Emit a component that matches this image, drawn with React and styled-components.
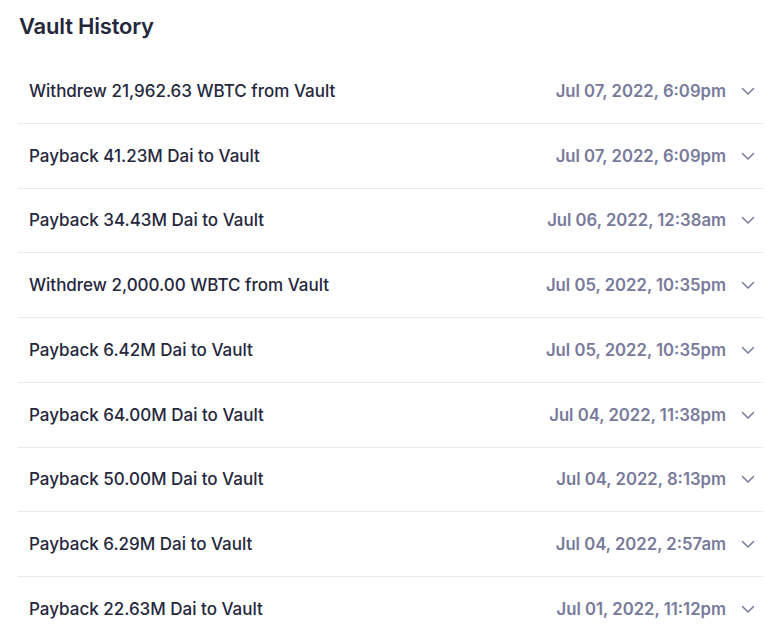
import React from "react";
import styled, { createGlobalStyle } from "styled-components";

const Global = createGlobalStyle`
  html, body { margin: 0; padding: 0; background: #fff; }
  body { font-family: Inter, "Noto Sans", sans-serif; -webkit-font-smoothing: antialiased; }
`;

const Page = styled.div`
  padding: 10px 18px 0 18px;
  width: 745px;
`;

const Title = styled.h2`
  margin: 0 0 0 1px;
  font-size: 22px;
  line-height: 32px;
  font-weight: 600;
  color: #25273d;
  letter-spacing: -0.2px;
`;

const List = styled.div`
  margin-top: 17px;
  display: flex;
  flex-direction: column;
`;

const Row = styled.div`
  height: 63.75px;
  display: flex;
  align-items: center;
  justify-content: space-between;
  padding: 0 8.5px 0 11px;
  border-bottom: 1px solid #eaeaea;
`;

const Label = styled.span`
  font-size: 17px;
  font-weight: 500;
  color: #25273d;
`;

const Right = styled.div`
  display: flex;
  align-items: center;
  gap: 14.5px;
`;

const DateText = styled.span`
  font-size: 16.7px;
  font-weight: 600;
  color: #787a9b;
`;

const Chevron = styled.svg`
  width: 14px;
  height: 14px;
  display: block;
`;

const items = [
  ["Withdrew 21,962.63 WBTC from Vault", "Jul 07, 2022, 6:09pm"],
  ["Payback 41.23M Dai to Vault", "Jul 07, 2022, 6:09pm"],
  ["Payback 34.43M Dai to Vault", "Jul 06, 2022, 12:38am"],
  ["Withdrew 2,000.00 WBTC from Vault", "Jul 05, 2022, 10:35pm"],
  ["Payback 6.42M Dai to Vault", "Jul 05, 2022, 10:35pm"],
  ["Payback 64.00M Dai to Vault", "Jul 04, 2022, 11:38pm"],
  ["Payback 50.00M Dai to Vault", "Jul 04, 2022, 8:13pm"],
  ["Payback 6.29M Dai to Vault", "Jul 04, 2022, 2:57am"],
  ["Payback 22.63M Dai to Vault", "Jul 01, 2022, 11:12pm"],
];

export default function App() {
  return (
    <Page>
      <Global />
      <Title>Vault History</Title>
      <List>
        {items.map(([label, date], i) => (
          <Row key={i}>
            <Label>{label}</Label>
            <Right>
              <DateText>{date}</DateText>
              <Chevron viewBox="0 0 14 14" fill="none">
                <path d="M1.5 4.5 L7 10 L12.5 4.5" stroke="#787a9b" strokeWidth="1.5" strokeLinecap="round" strokeLinejoin="round" />
              </Chevron>
            </Right>
          </Row>
        ))}
      </List>
    </Page>
  );
}
